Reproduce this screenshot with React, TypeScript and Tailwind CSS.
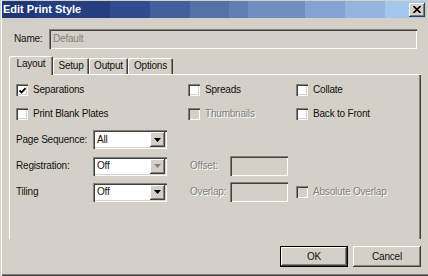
import React from "react";

const SUNKEN =
  "shadow-[inset_1px_1px_0_#808080,inset_2px_2px_0_#404040,inset_-1px_-1px_0_#ffffff,inset_-2px_-2px_0_#d4d0c8]";
const RAISED =
  "shadow-[inset_-1px_-1px_0_#404040,inset_1px_1px_0_#ffffff,inset_-2px_-2px_0_#808080]";

function Check({ checked = false, disabled = false }: { checked?: boolean; disabled?: boolean }) {
  return (
    <span
      className={
        disabled
          ? `w-[12px] h-[12px] shrink-0 bg-[#d4d0c8] ${SUNKEN} flex items-center justify-center`
          : `w-[12px] h-[12px] shrink-0 bg-white ${SUNKEN} flex items-center justify-center`
      }
    >
      {checked && (
        <svg width="7" height="7" viewBox="0 0 7 7">
          <path d="M0.5 3.5 L2.5 5.5 L6.5 1.2" stroke="#000" strokeWidth="1.8" fill="none" />
        </svg>
      )}
    </span>
  );
}

const DIS = "text-[#808080] [text-shadow:1px_1px_0_#ffffff]";

function CheckItem({
  label,
  checked = false,
  disabled = false,
}: {
  label: string;
  checked?: boolean;
  disabled?: boolean;
}) {
  return (
    <div className="flex items-center gap-[5px] h-[12px]">
      <Check checked={checked} disabled={disabled} />
      <span className={disabled ? DIS : "text-[#111]"}>{label}</span>
    </div>
  );
}

function Select({ value, grayArrow = false }: { value: string; grayArrow?: boolean }) {
  return (
    <div className={`w-[74px] h-[19px] bg-white ${SUNKEN} flex items-center pl-[4px] pr-[2px]`}>
      <span className="flex-1 text-[#111]">{value}</span>
      <span className={`w-[15px] h-[15px] bg-[#d4d0c8] ${RAISED} flex items-center justify-center`}>
        <svg width="7" height="4" viewBox="0 0 7 4">
          <polygon points="0,0 7,0 3.5,4" fill={grayArrow ? "#808080" : "#000"} />
        </svg>
      </span>
    </div>
  );
}

function Tab({ label, w, selected = false }: { label: string; w: string; selected?: boolean }) {
  return (
    <div
      className={
        selected
          ? `relative z-10 -mb-px h-[19px] ${w} bg-[#d4d0c8] rounded-t-[2px] shadow-[inset_1px_1px_0_#ffffff,inset_-1px_0_0_#404040,inset_-2px_0_0_#808080] flex items-start justify-center pt-[3px] text-[#111]`
          : `h-[16px] ${w} bg-[#d4d0c8] rounded-t-[2px] shadow-[inset_1px_1px_0_#ffffff,inset_-1px_0_0_#404040,inset_-2px_0_0_#808080] flex items-center justify-center text-[#111]`
      }
    >
      {label}
    </div>
  );
}

export default function App() {
  return (
    <div className="font-['Liberation_Sans',Arial,sans-serif] text-[10px] leading-none tracking-[-0.2px] w-[428px] h-[276px] bg-[#d4d0c8] pt-px pl-[2px] pr-[2px] flex flex-col shadow-[inset_1px_0_0_#d4d0c8,inset_2px_0_0_#ffffff,inset_0_-1px_0_#404040,inset_0_-2px_0_#808080]">
      {/* Title bar */}
      <div className="h-[17px] flex items-center pl-[1px] pr-[1px] bg-[linear-gradient(90deg,#1e3577_0px,#1e3577_33px,#243e80_33px,#243e80_108px,#2f4c8e_108px,#2f4c8e_148px,#41609c_148px,#41609c_188px,#5372a8_188px,#5372a8_227px,#5f7fb2_227px,#5f7fb2_246px,#6e8fc0_246px,#6e8fc0_303px,#82a3d4_303px,#82a3d4_343px,#93b5df_343px,#93b5df_383px,#a4c7ee_383px,#a4c7ee_100%)]">
        <span className="text-white font-bold text-[11px] tracking-[0px]">Edit Print Style</span>
        <span className={`ml-auto w-[16px] h-[14px] bg-[#d4d0c8] ${RAISED} flex items-center justify-center`}>
          <svg width="8" height="7" viewBox="0 0 8 7">
            <path d="M0.5 0 L7.5 7 M7.5 0 L0.5 7" stroke="#000" strokeWidth="1.6" />
          </svg>
        </span>
      </div>

      {/* Name */}
      <div className="mt-[11px] h-[20px] flex items-center">
        <span className="ml-[12px] w-[35px] text-[#111]">Name:</span>
        <div className={`w-[368px] h-[20px] ${SUNKEN} flex items-center pl-[4px]`}>
          <span className="text-[#808080]">Default</span>
        </div>
      </div>

      {/* Tabs */}
      <div className="mt-[7px] ml-[7px] h-[18px] flex items-end">
        <Tab label="Layout" w="w-[44px]" selected />
        <Tab label="Setup" w="w-[36px]" />
        <Tab label="Output" w="w-[39px]" />
        <Tab label="Options" w="w-[45px]" />
      </div>

      {/* Panel */}
      <div className="ml-[7px] w-[412px] h-[165px] shadow-[inset_1px_1px_0_#ffffff,inset_-1px_0_0_#404040,inset_-2px_0_0_#808080] pt-[10px] pl-[7px] flex flex-col">
        <div className="grid grid-cols-[172px_108px_1fr]">
          <CheckItem label="Separations" checked />
          <CheckItem label="Spreads" />
          <CheckItem label="Collate" />
        </div>
        <div className="mt-[12px] grid grid-cols-[172px_108px_1fr]">
          <CheckItem label="Print Blank Plates" />
          <CheckItem label="Thumbnails" disabled />
          <CheckItem label="Back to Front" />
        </div>
        <div className="mt-[10px] h-[19px] flex items-center">
          <span className="w-[77px] text-[#111]">Page Sequence:</span>
          <Select value="All" />
        </div>
        <div className="mt-[7px] h-[20px] flex items-center">
          <span className="w-[77px] text-[#111]">Registration:</span>
          <Select value="Off" grayArrow />
          <span className={`ml-[23px] w-[40px] ${DIS}`}>Offset:</span>
          <div className={`w-[58px] h-[20px] ${SUNKEN}`} />
        </div>
        <div className="mt-[6px] h-[20px] flex items-center">
          <span className="w-[77px] text-[#111]">Tiling</span>
          <Select value="Off" />
          <span className={`ml-[23px] w-[40px] ${DIS}`}>Overlap:</span>
          <div className={`w-[58px] h-[20px] ${SUNKEN}`} />
          <div className="ml-[8px]">
            <CheckItem label="Absolute Overlap" disabled />
          </div>
        </div>
      </div>

      {/* Buttons */}
      <div className="mt-[7px] flex justify-end gap-[5px] pr-[5px]">
        <div className="w-[68px] h-[21px] border border-black bg-[#d4d0c8] shadow-[inset_-1px_-1px_0_#404040,inset_1px_1px_0_#ffffff,inset_-2px_-2px_0_#808080] flex items-center justify-center text-[#111]">
          OK
        </div>
        <div className={`w-[68px] h-[21px] bg-[#d4d0c8] ${RAISED} flex items-center justify-center text-[#111]`}>
          Cancel
        </div>
      </div>
    </div>
  );
}
